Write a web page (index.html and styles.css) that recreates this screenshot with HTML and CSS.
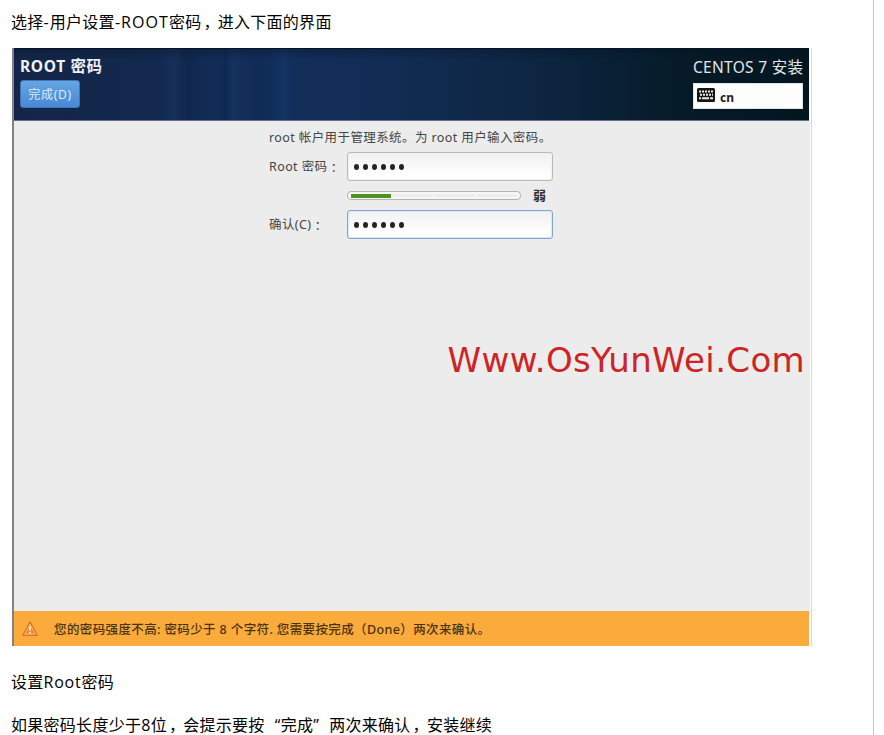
FILE: index.html
```
<!DOCTYPE html>
<html lang="zh-CN">
<head>
<meta charset="utf-8">
<title>ROOT 密码</title>
<link rel="stylesheet" href="styles.css">
</head>
<body>
<main class="article">
  <p class="para intro">选择<span class="caps">-</span>用户设置<span class="caps">-ROOT</span>密码<span class="comma">，</span>进入下面的界面</p>
  <section class="installer">
    <header class="top">
      <div class="left">
        <h1>ROOT 密码</h1>
        <button class="done">完成(D)</button>
      </div>
      <div class="right">
        <div class="product">CENTOS 7 安装</div>
        <div class="keyboard">
          <svg width="18" height="14" viewBox="0 0 18 14"><rect width="18" height="14" rx="1.5" fill="#161616"/><g stroke="#e8e8e8" stroke-width="2" fill="none"><path d="M2 3.5h14" stroke-dasharray="2 1"/><path d="M3 6.7h13" stroke-dasharray="2 1"/><path d="M2 10.3h2M5 10.3h7M13 10.3h3"/></g></svg>
          <span>cn</span>
        </div>
      </div>
    </header>
    <div class="content">
      <div class="form">
        <p class="desc">root 帐户用于管理系统。为 root 用户输入密码。</p>
        <div class="row"><label><span>Root 密码</span><i class="colon">：</i></label><div class="field"><b></b><b></b><b></b><b></b><b></b><b></b></div></div>
        <div class="strength"><div class="meter"><i class="on"></i><i></i><i></i><i></i></div><span class="weak">弱</span></div>
        <div class="row"><label><span>确认(C)</span><i class="colon">：</i></label><div class="field focus"><b></b><b></b><b></b><b></b><b></b><b></b></div></div>
      </div>
      <div class="watermark">Www.OsYunWei.Com</div>
    </div>
    <footer class="warning">
      <svg width="16" height="16" viewBox="0 0 16 16"><path d="M8 1.2L15 14.3H1z" fill="#f58a2c" stroke="#d9741b" stroke-width="1.4" stroke-linejoin="round"/><path d="M8 3.2L13.4 13.2H2.6z" fill="none" stroke="#ffc58a" stroke-width=".8"/><path d="M8 5.5v4.2M8 11v1.6" stroke="#fff6e8" stroke-width="1.7"/></svg>
      <span>您的密码强度不高: 密码少于 8 个字符. 您需要按完成（Done）两次来确认。</span>
    </footer>
  </section>
  <p class="para after">设置<span class="latin">Root</span>密码</p>
  <p class="para last">如果密码长度少于8位<span class="comma">，</span>会提示要按<span class="quote">“</span>完成<span class="quote close">”</span>两次来确认<span class="comma">，</span>安装继续</p>
</main>
</body>
</html>
```
FILE: styles.css
```
* { box-sizing: border-box; }
html, body { height: 100%; margin: 0; overflow: hidden; background: #fff; }
.article { width: 874px; height: 735px; border-right: 1px solid #c4c4c4; padding-left: 12px; font-family: "Open Sans", "Noto Sans CJK SC", sans-serif; }
p, h1 { margin: 0; white-space: nowrap; }
span { white-space: nowrap; }
.para { font-size: 16px; line-height: 24px; letter-spacing: .28px; color: #000; margin-left: -1px; }
.intro { height: 48px; padding-top: 10px; }
.after { margin-top: 24px; }
.last { margin-top: 19px; line-height: 22px; padding-top: 1px; }
.caps { letter-spacing: 1.05px; }
.latin { letter-spacing: .75px; }
.comma { position: relative; top: 0; left: 2px; font-family: "Noto Sans CJK SC", sans-serif; line-height: 1; }
.quote { display: inline-block; width: 16px; text-align: right; }
.close { text-align: left; }

.installer { width: 800px; height: 598px; display: flex; flex-direction: column; border-left: 2px solid #828282; border-right: 1px solid #d8d8d8; font-family: "Noto Sans", "Noto Sans CJK SC", sans-serif; }
.top { height: 73px; margin-right: 2px; border-top: 1px solid #071326; border-bottom: 1px solid #61708a; display: flex; justify-content: space-between; padding: 0 6px;
  background:
    linear-gradient(180deg, rgba(3,14,31,.3), transparent 16%),
    linear-gradient(90deg, transparent 18%, rgba(40,85,145,.14) 20% 20.4%, transparent 21%, rgba(3,15,45,.14) 22%, transparent 23.5% 26%, rgba(3,15,45,.16) 26.5%, rgba(40,85,145,.12) 27.5%, transparent 29%, rgba(3,15,45,.12) 31%, transparent 32.5%, rgba(40,85,145,.12) 34%, transparent 35%),
    linear-gradient(90deg, #142548 0%, #12294f 20%, #112f5c 32%, #122c54 46%, #0e2745 62%, #0a2239 72%, #061b27 84%, #021620 100%); }
h1 { font-size: 15.5px; line-height: 20px; letter-spacing: .65px; margin-top: 7px; color: #eef1f6; font-weight: 700; }
.done { display: flex; align-items: center; justify-content: center; width: 60px; height: 28px; margin-top: 4px; padding: 2px 0 0; border: 1px solid #3c75b8; border-radius: 3px; background: linear-gradient(#66a5e3, #4688d4); color: #dcebfa; font: 12px/16px "Noto Sans", "Noto Sans CJK SC", sans-serif; letter-spacing: .7px; }
.right { width: 110px; margin-right: 0; }
.product { font-size: 15.5px; line-height: 22px; letter-spacing: .3px; margin-top: 7px; color: #e0e6e9; white-space: nowrap; }
.keyboard { height: 26px; margin-top: 5px; padding: 0 3px; display: flex; align-items: center; gap: 5px; background: #fdfdfd; border: 1px solid #dfe4e7; color: #222; font-size: 12px; font-weight: 700; }
.keyboard svg { margin-top: -2px; }
.keyboard span { margin-top: 2px; }

.content { height: 490px; background: #ececec; display: flex; flex-direction: column; margin-right: 1px; }
.form { width: 285px; margin-left: 255px; padding-top: 7px; color: #454545; font-size: 12.5px; letter-spacing: .4px; }
.desc { line-height: 20px; height: 24px; }
.row { display: flex; align-items: center; height: 29px; }
label { width: 78px; display: flex; align-items: center; line-height: 18px; }
.colon { font-style: normal; width: 13px; margin: 3px 0 0; text-align: center; font-family: "Noto Sans CJK TC", sans-serif; }
.field { width: 206px; height: 29px; border: 1px solid #b9b9b9; border-radius: 3px; background: linear-gradient(#f0f0f0, #fefefe 75%); display: flex; align-items: center; padding-left: 6px; gap: 4px; box-shadow: inset 0 0 0 1px #f2f2f2; }
.focus { border-color: #7fa6d4; box-shadow: inset 0 0 0 1px #dde9f5; }
.field b { width: 5px; height: 6px; border-radius: 50%; background: #242424; }
.strength { height: 29px; margin-left: 78px; display: flex; align-items: center; gap: 12px; }
.meter { width: 174px; height: 9px; border: 1px solid #b4b4b0; border-radius: 4px; background: #f6f6f5; padding: 2px 3px; display: flex; gap: 2px; }
.meter i { flex: 1; height: 3px; background: #ededec; }
.meter .on { height: 4px; background: #4f9224; }
.weak { color: #303030; font-size: 13px; font-weight: 700; margin-top: -2px; }
.watermark { margin: 98px 5px 0 auto; color: #cd2424; font: 34px/46px "DejaVu Sans", sans-serif; letter-spacing: .35px; }

.warning { height: 35px; margin-right: 2px; padding-left: 8px; background: #faab3c; display: flex; align-items: center; gap: 16px; color: #4a3310; font-size: 12.5px; letter-spacing: .38px; font-weight: 500; }
```
